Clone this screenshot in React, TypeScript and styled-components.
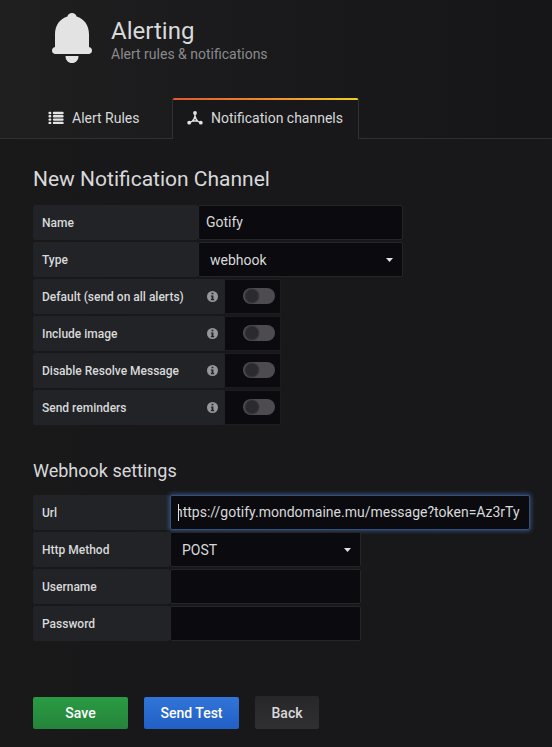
import React, { useEffect, useId, useRef } from 'react';
import styled, { createGlobalStyle, css } from 'styled-components';

const GlobalStyle = createGlobalStyle`
  *, *::before, *::after { box-sizing: border-box; }
  html { background: #18181b; }
  body {
    margin: 0;
    min-height: 100vh;
    background: linear-gradient(90deg, #191919 0, #18181b 160px);
    color: #d8d9da;
    font-family: Roboto, "Liberation Sans", sans-serif;
    font-size: 14px;
    line-height: 20px;
  }
  h1, h2, h3, p { margin: 0; font-weight: 400; }
  button, input, select { font: inherit; color: inherit; }
`;

const Header = styled.header`
  background: linear-gradient(90deg, #1f1f20 0%, #19191b 55%, #161618 100%);
  border-bottom: 1px solid #303033;
`;

const Brand = styled.div`
  display: flex;
  align-items: flex-start;
  gap: 18px;
  height: 98px;
  padding: 12px 33px 0 51px;
`;

const BellIcon = styled.svg`
  flex: none;
  width: 42px;
  height: 52px;
  fill: #e3e3e3;
`;

const Title = styled.h1`
  padding-top: 5px;
  font-size: 24px;
  line-height: 28px;
`;

const Subtitle = styled.p`
  color: #8a8a8c;
  line-height: 18px;
`;

const Tabs = styled.nav`
  display: flex;
  padding-left: 33px;
  margin-bottom: -1px;
`;

const Tab = styled.a<{ $active?: boolean }>`
  display: flex;
  align-items: center;
  gap: 8px;
  height: 41px;
  padding: 0 15px 2px 14px;
  color: #d8d9da;
  text-decoration: none;
  border: 1px solid transparent;
  border-width: 0 1px;

  ${({ $active }) =>
    $active
      ? css`
          border-color: #303033;
          border-radius: 2px 2px 0 0;
          background:
            linear-gradient(90deg, #e0592f, #f08a2c 50%, #ecd022) top / 100% 2px no-repeat border-box,
            #18181b;
        `
      : css`
          width: 139px;
        `}
`;

const TabIcon = styled.svg`
  flex: none;
  width: 16px;
  height: 16px;
  fill: #e3e3e3;
`;

const Form = styled.form`
  padding: 28px 22px 18px 33px;
`;

const PageHeading = styled.h2`
  margin-bottom: 14px;
  font-size: 21px;
  line-height: 24px;
`;

const SectionHeading = styled.h3`
  margin: 34px 0 12px;
  font-size: 18px;
  line-height: 24px;
`;

const Row = styled.div`
  display: flex;
  height: 35px;
  margin-bottom: 2px;
`;

const Label = styled.label<{ $width: number }>`
  display: flex;
  flex: none;
  align-items: center;
  justify-content: space-between;
  width: ${({ $width }) => $width}px;
  padding: 0 7px 0 9px;
  border-radius: 2px;
  background: #222326;
  font-size: 12px;
  font-weight: 500;
`;

const fieldStyle = css`
  height: 35px;
  margin: 0;
  border: 1px solid #262628;
  border-radius: 2px;
  background: #0b0b0f;
  outline: none;
`;

const InputBox = styled.div<{ $width: number }>`
  position: relative;
  flex: 0 1 ${({ $width }) => $width}px;
  min-width: 0;
`;

const TextInput = styled.input`
  ${fieldStyle}
  display: block;
  width: 100%;
  padding: 0 9px 1px 7px;

  &:focus {
    border-color: #35507c;
    box-shadow: 0 0 4px 1px #35507c;
    caret-color: transparent;
  }
`;

const Caret = styled.span`
  position: absolute;
  top: 9px;
  left: 8px;
  width: 1px;
  height: 17px;
  background: #e3e3e3;
  pointer-events: none;
`;

const SelectBox = styled.div<{ $width: number }>`
  position: relative;
  flex: 0 1 ${({ $width }) => $width}px;
`;

const Select = styled.select`
  ${fieldStyle}
  width: 100%;
  padding: 0 24px 0 11px;
  appearance: none;
`;

const Arrow = styled.svg`
  position: absolute;
  top: 16px;
  right: 10px;
  width: 7px;
  height: 4px;
  fill: #e3e3e3;
  pointer-events: none;
`;

const InfoIcon = styled.svg`
  width: 11px;
  height: 11px;
`;

const SwitchCell = styled.div`
  display: flex;
  align-items: center;
  justify-content: flex-end;
  width: 56px;
  height: 35px;
  padding: 0 5px 2px 0;
  border: 1px solid #1d1d20;
  border-left: 0;
  background: #0b0b0f;
`;

const Switch = styled.input`
  width: 32px;
  height: 16px;
  margin: 0;
  border-radius: 8px;
  background: radial-gradient(circle at 9px 8px, #2b2a2e 6px, #4d4b50 8px);
  appearance: none;

  &:checked {
    background: radial-gradient(circle at 23px 8px, #2b2a2e 6px, #33a2e5 8px);
  }
`;

const Actions = styled.div`
  display: flex;
  align-items: flex-end;
  gap: 16px;
  margin-top: 55px;
`;

const tones = {
  green: 'linear-gradient(#2a9b43, #24843a)',
  blue: 'linear-gradient(#3274d9, #2160c4)',
  dark: 'linear-gradient(#27272a, #303033)',
};

const Button = styled.button<{ $tone: keyof typeof tones }>`
  height: ${({ $tone }) => ($tone === 'dark' ? 33 : 32)}px;
  min-width: ${({ $tone }) => ($tone === 'dark' ? 64 : 95)}px;
  padding: 0 16px;
  border: 0;
  border-radius: 2px;
  background: ${({ $tone }) => tones[$tone]};
  color: ${({ $tone }) => ($tone === 'dark' ? '#d8d9da' : '#ffffff')};
  font-weight: 500;
`;

function Info() {
  return (
    <InfoIcon viewBox="0 0 12 12" aria-hidden="true">
      <circle cx="6" cy="6" r="6" fill="#97979a" />
      <path d="M5 1.8h2v1.8H5zM4.2 4.8H7v4h.8V10H4.2V8.800H5V6h-.8z" fill="#222326" />
    </InfoIcon>
  );
}

function TextRow({
  label,
  labelWidth,
  width,
  value = '',
  type = 'text',
  focused = false,
}: {
  label: string;
  labelWidth: number;
  width: number;
  value?: string;
  type?: string;
  focused?: boolean;
}) {
  const id = useId();
  const ref = useRef<HTMLInputElement>(null);
  useEffect(() => {
    if (focused && ref.current) {
      ref.current.focus();
      ref.current.setSelectionRange(0, 0);
    }
  }, [focused]);
  return (
    <Row>
      <Label htmlFor={id} $width={labelWidth}>{label}</Label>
      <InputBox $width={width}>
        <TextInput id={id} ref={ref} type={type} defaultValue={value} spellCheck={false} />
        {focused && <Caret />}
      </InputBox>
    </Row>
  );
}

function SelectRow({
  label,
  labelWidth,
  width,
  options,
}: {
  label: string;
  labelWidth: number;
  width: number;
  options: string[];
}) {
  const id = useId();
  return (
    <Row>
      <Label htmlFor={id} $width={labelWidth}>{label}</Label>
      <SelectBox $width={width}>
        <Select id={id}>
          {options.map((option) => <option key={option}>{option}</option>)}
        </Select>
        <Arrow viewBox="0 0 7 4" aria-hidden="true"><path d="M0 0h7L3.500 4z" /></Arrow>
      </SelectBox>
    </Row>
  );
}

function SwitchRow({ label }: { label: string }) {
  const id = useId();
  return (
    <Row>
      <Label htmlFor={id} $width={192}>{label}<Info /></Label>
      <SwitchCell><Switch id={id} type="checkbox" /></SwitchCell>
    </Row>
  );
}

export default function App() {
  return (
    <>
      <GlobalStyle />
      <Header>
        <Brand>
          <BellIcon viewBox="0 0 42 52" aria-hidden="true">
            <path d="M21 1c2.400 0 4 1.500 4.600 3.500C33 6.500 38 13.500 38 22v13c2 .6 3 1.800 3 3.500 0 2-1.400 3.500-3.500 3.500h-33C2.400 42 1 40.500 1 38.500 1 36.800 2 35.600 4 35V22C4 13.500 9 6.500 16.400 4.500 17 2.500 18.600 1 21 1zM14.500 44h13c0 4.300-2.700 7-6.500 7s-6.500-2.700-6.500-7z" />
          </BellIcon>
          <div>
            <Title>Alerting</Title>
            <Subtitle>Alert rules &amp; notifications</Subtitle>
          </div>
        </Brand>
        <Tabs>
          <Tab href="#rules">
            <TabIcon viewBox="0 0 16 16" aria-hidden="true">
              <path
                d="M6 3H14.500M6 6.300H14.500M6 9.600H14.500M6 12.900H14.500M1.600 3h.6M1.600 6.300h.6M1.600 9.600h.6M1.600 12.900h.6"
                fill="none"
                stroke="#e3e3e3"
                strokeWidth="2.400"
                strokeLinecap="round"
              />
            </TabIcon>
            Alert Rules
          </Tab>
          <Tab href="#channels" $active aria-current="page">
            <TabIcon viewBox="0 0 16 16" aria-hidden="true">
              <path d="M8 3v5M8 7.500 5.500 11 2 13M8 7.500l2.500 3.500 3.500 2M5.500 11h5" fill="none" stroke="#e3e3e3" strokeWidth="1.400" />
              <circle cx="8" cy="3" r="1.900" />
              <circle cx="8" cy="7.500" r="1.300" />
              <circle cx="2.200" cy="12.700" r="1.900" />
              <circle cx="13.800" cy="12.700" r="1.900" />
            </TabIcon>
            Notification channels
          </Tab>
        </Tabs>
      </Header>
      <Form onSubmit={(event) => event.preventDefault()}>
        <PageHeading>New Notification Channel</PageHeading>
        <TextRow label="Name" labelWidth={165} width={205} value="Gotify" />
        <SelectRow label="Type" labelWidth={165} width={205} options={['webhook', 'email', 'slack']} />
        <SwitchRow label="Default (send on all alerts)" />
        <SwitchRow label="Include image" />
        <SwitchRow label="Disable Resolve Message" />
        <SwitchRow label="Send reminders" />
        <SectionHeading>Webhook settings</SectionHeading>
        <TextRow label="Url" labelWidth={137} width={360} value="https://gotify.mondomaine.mu/message?token=Az3rTy" focused />
        <SelectRow label="Http Method" labelWidth={137} width={191} options={['POST', 'PUT']} />
        <TextRow label="Username" labelWidth={137} width={191} />
        <TextRow label="Password" labelWidth={137} width={191} type="password" />
        <Actions>
          <Button type="submit" $tone="green">Save</Button>
          <Button type="button" $tone="blue">Send Test</Button>
          <Button type="button" $tone="dark">Back</Button>
        </Actions>
      </Form>
    </>
  );
}
